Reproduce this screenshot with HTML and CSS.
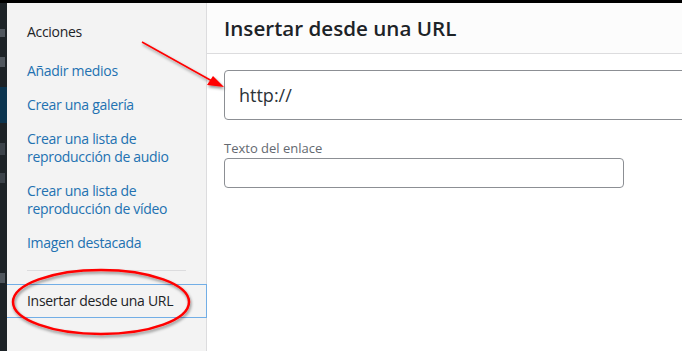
FILE: index.html
```html
<!DOCTYPE html>
<html lang="es">
<head>
    <meta charset="UTF-8">
    <meta name="viewport" content="width=device-width, initial-scale=1.0">
    <title>Insertar desde una URL</title>
    <link rel="stylesheet" href="styles.css">
</head>
<body>
    <div class="topbar"></div>
    <div class="frame">
        <div class="adminbar">
            <span class="glyph g1"></span>
            <span class="glyph g2"></span>
            <span class="current"></span>
            <span class="glyph g3"></span>
            <span class="glyph g4"></span>
            <span class="glyph g5"></span>
        </div>

        <div class="menu">
            <h2 class="menu-heading">Acciones</h2>
            <a class="menu-item" href="#">Añadir medios</a>
            <a class="menu-item" href="#">Crear una galería</a>
            <a class="menu-item" href="#">Crear una lista de reproducción de audio</a>
            <a class="menu-item" href="#">Crear una lista de reproducción de vídeo</a>
            <a class="menu-item" href="#">Imagen destacada</a>
            <div class="separator"></div>
            <a class="menu-item active" href="#">Insertar desde una URL</a>
        </div>

        <div class="content">
            <div class="title-bar">
                <h1>Insertar desde una URL</h1>
            </div>
            <div class="embed">
                <input class="url-input" type="text" value="http://">
                <label class="field-label" for="linkText">Texto del enlace</label>
                <input class="text-input" type="text" id="linkText">
            </div>
        </div>
    </div>

    <!-- red annotations drawn over the screenshot -->
    <svg class="marks" width="682" height="351" viewBox="0 0 682 351">
        <defs>
            <filter id="shadow" x="-20%" y="-20%" width="140%" height="140%">
                <feDropShadow dx="1" dy="2" stdDeviation="1.5" flood-color="#000" flood-opacity="0.45"/>
            </filter>
        </defs>
        <g filter="url(#shadow)">
            <line x1="142" y1="42" x2="212" y2="81" stroke="#f00" stroke-width="1.5"/>
            <polygon points="224,87 207,85 213,76" fill="#f00"/>
            <ellipse cx="101" cy="302" rx="88" ry="32" fill="none" stroke="#f00" stroke-width="2.5"/>
        </g>
    </svg>
</body>
</html>
```

FILE: styles.css
```css
body {
    margin: 0;
    padding: 0;
    width: 682px;
    height: 351px;
    overflow: hidden;
    position: relative;
    font-family: "Open Sans", "Noto Sans", sans-serif;
    background-color: #fff;
}

.topbar {
    height: 3px;
    background-color: #000;
}

.frame {
    display: flex;
    height: 348px;
}

.adminbar {
    width: 7px;
    flex-shrink: 0;
    background-color: #1d2327;
    display: flex;
    flex-direction: column;
}

.glyph {
    display: block;
    width: 5px;
    background-color: #50575e;
}

.g1 { height: 8px; margin-top: 26px; }
.g2 { height: 10px; margin-top: 20px; }
.g3 { height: 12px; margin-top: 20px; background-color: #3c434a; }
.g4 { height: 10px; margin-top: 18px; background-color: #3c434a; }
.g5 { height: 10px; margin-top: 90px; }

.current {
    display: block;
    height: 36px;
    margin-top: 20px;
    background-color: #0c3550;
}

.menu {
    width: 199px;
    flex-shrink: 0;
    background-color: #f3f3f3;
    border-right: 1px solid #dcdcde;
    display: flex;
    flex-direction: column;
    padding-top: 20px;
    letter-spacing: -0.3px;
}

.menu-heading {
    margin: 0 0 13px;
    padding: 0 20px;
    font-size: 14px;
    font-weight: 400;
    line-height: 18px;
    color: #1d2327;
}

.menu-item {
    display: block;
    padding: 8px 20px;
    font-size: 14px;
    line-height: 18px;
    color: #2271b1;
    text-decoration: none;
}

.separator {
    height: 1px;
    margin: 10px 20px 13px;
    background-color: #dcdcde;
}

.menu-item.active {
    color: #1d2327;
    border-top: 1px solid #72aee6;
    border-bottom: 1px solid #72aee6;
    border-right: 1px solid #72aee6;
    padding: 7px 20px;
    margin-right: -1px;
}

.content {
    flex: 1;
    min-width: 0;
    overflow: hidden;
    display: flex;
    flex-direction: column;
}

.title-bar {
    height: 50px;
    background-color: #fcfcfc;
    border-bottom: 1px solid #dcdcde;
    display: flex;
    align-items: center;
    padding: 0 17px;
}

.title-bar h1 {
    margin: 0;
    font-size: 20.6px;
    font-weight: 600;
    color: #1d2327;
}

.embed {
    padding: 16px 0 0 17px;
    display: flex;
    flex-direction: column;
    align-items: flex-start;
}

.url-input {
    box-sizing: border-box;
    width: 500px;
    height: 50px;
    padding: 0 14px;
    font-family: inherit;
    font-size: 18px;
    color: #2c3338;
    border: 1px solid #8c8f94;
    border-radius: 4px;
    background-color: #fff;
}

.field-label {
    margin-top: 20px;
    font-size: 13px;
    line-height: 16px;
    color: #646970;
}

.text-input {
    box-sizing: border-box;
    width: 400px;
    height: 30px;
    margin-top: 2px;
    border: 1px solid #8c8f94;
    border-radius: 4px;
    background-color: #fff;
}

.marks {
    position: absolute;
    top: 0;
    left: 0;
    pointer-events: none;
}
```
